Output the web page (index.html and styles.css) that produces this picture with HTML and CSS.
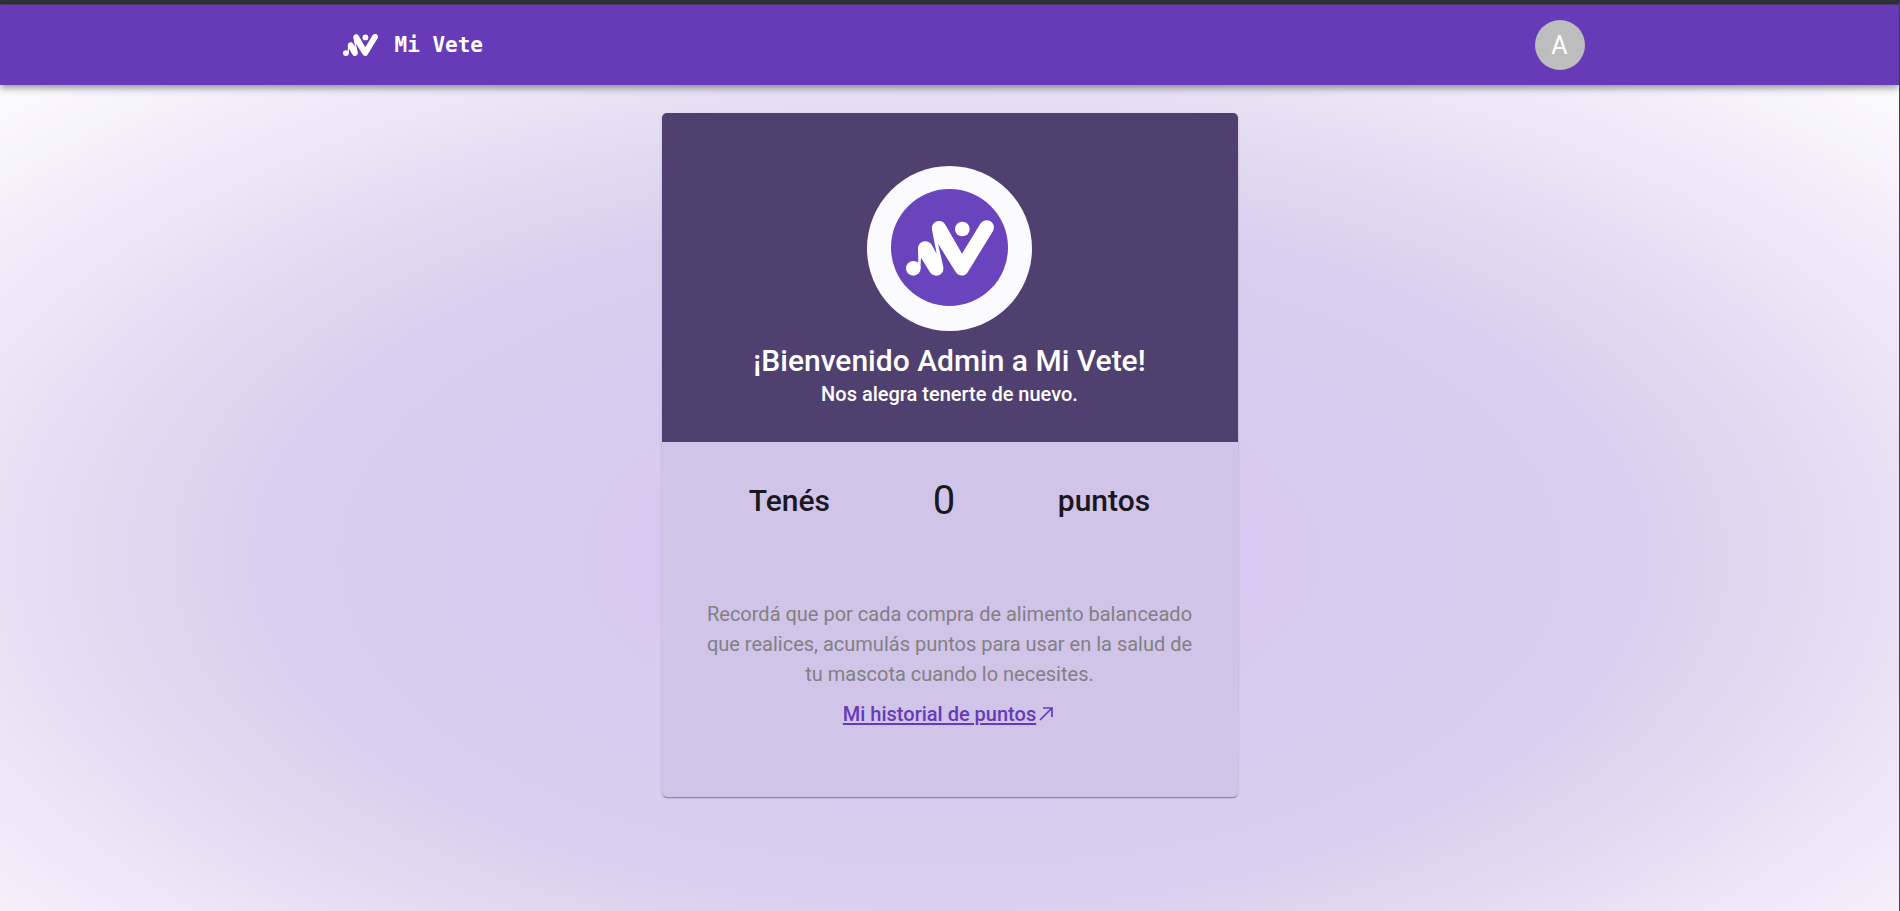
FILE: index.html
```html
<!DOCTYPE html>
<html lang="es">
<head>
<meta charset="utf-8">
<meta name="viewport" content="width=device-width, initial-scale=1">
<title>Mi Vete</title>
<link rel="stylesheet" href="styles.css">
</head>
<body>
<svg class="defs" width="0" height="0" aria-hidden="true">
  <symbol id="mark" viewBox="138 180 264 166">
    <circle cx="160" cy="324" r="22"/>
    <circle cx="307" cy="206" r="22"/>
    <path d="M174 265C174 240 204 236 214 252L230 280L216 208C212 183 244 173 256 193L306 280L361 190C377 167 412 185 399 212L324 334C315 350 296 349 287 335L234 250L250 320C254 345 222 355 210 336L183 292L181 326L168 312L175 303Z"/>
  </symbol>
</svg>
<div class="page">
  <header class="bar">
    <div class="bar-inner">
      <a class="brand" href="#">
        <svg class="brand-mark" aria-hidden="true"><use href="#mark"/></svg>
        <span>Mi Vete</span>
      </a>
      <button class="avatar" type="button" aria-label="Cuenta de Admin">A</button>
    </div>
  </header>
  <main class="content">
    <article class="card">
      <header class="welcome">
        <div class="badge"><div class="badge-core"><svg class="badge-mark" aria-hidden="true"><use href="#mark"/></svg></div></div>
        <h1 class="title">¡Bienvenido Admin a Mi Vete!</h1>
        <p class="subtitle">Nos alegra tenerte de nuevo.</p>
      </header>
      <div class="body">
        <div class="points">
          <span>Tenés</span>
          <span class="count">0</span>
          <span>puntos</span>
        </div>
        <p class="note">Recordá que por cada compra de alimento balanceado que realices, acumulás puntos para usar en la salud de tu mascota cuando lo necesites.</p>
        <p class="more"><a class="history" href="#">Mi historial de puntos</a><svg class="arrow" viewBox="0 0 20 20" aria-hidden="true"><path d="M4 16L16 4M7 4H16V13" /></svg></p>
      </div>
    </article>
  </main>
</div>
</body>
</html>
```
FILE: styles.css
```css
* { box-sizing: border-box; }
body {
  margin: 0;
  font-family: Roboto, "Liberation Sans", sans-serif;
  font-size: 20px;
  line-height: 30px;
  color: #1a171e;
}
h1, p { margin: 0; }
.defs { position: absolute; }
.page {
  min-height: 100vh;
  border-top: 4px solid #2d323e;
  border-right: 1px solid #4a4456;
  background: radial-gradient(73% 77% at 50% 61%, #d8c5f5 0%, #dacfee 50%, #ffffff 100%);
}
.bar {
  position: relative;
  background: #673ab7;
  border-top: 1px solid #54385f;
  box-shadow: 0 3px 5px -1px rgba(0,0,0,.2), 0 5px 6px rgba(0,0,0,.14), 0 1px 12px rgba(0,0,0,.12);
}
.bar-inner {
  display: flex;
  align-items: center;
  justify-content: space-between;
  max-width: 1270px;
  height: 80px;
  margin: 0 auto;
  padding-left: 28px;
}
.brand {
  display: flex;
  align-items: center;
  gap: 17px;
  color: #fff;
  font-family: "DejaVu Sans Mono", monospace;
  font-size: 21px;
  font-weight: 700;
  text-decoration: none;
}
.brand-mark { width: 35px; height: 22px; fill: #fff; }
.avatar {
  width: 50px;
  height: 50px;
  padding: 0;
  border: 0;
  border-radius: 50%;
  background: #bdbdbd;
  color: #fff;
  font: 400 25px/52px Roboto, sans-serif;
}
.content { padding: 28px 16px; }
.card {
  max-width: 576px;
  margin: 0 auto;
  border-radius: 5px;
  overflow: hidden;
  background: #d0c4e8;
  text-align: center;
  box-shadow: 0 2px 1px -1px rgba(0,0,0,.2), 0 1px 1px rgba(0,0,0,.14), 0 1px 3px rgba(0,0,0,.12);
}
.welcome {
  display: flex;
  flex-direction: column;
  align-items: center;
  padding: 53px 20px 35px;
  background: #504070;
  color: #fff;
}
.badge {
  display: flex;
  align-items: center;
  justify-content: center;
  width: 165px;
  height: 165px;
  padding-bottom: 2px;
  border-radius: 50%;
  background: #fbfaff;
}
.badge-core {
  display: flex;
  align-items: center;
  justify-content: center;
  width: 117px;
  height: 117px;
  border-radius: 50%;
  background: #6a44bd;
}
.badge-mark { width: 88px; height: 56px; fill: #fff; }
.title { margin-top: 10px; font-size: 30px; line-height: 40px; font-weight: 500; }
.subtitle { font-weight: 500; line-height: 26px; }
.body { padding: 30px 40px 68px; }
.points {
  display: flex;
  align-items: center;
  justify-content: space-around;
  margin: 0 -4px 69px;
  font-size: 30px;
  line-height: 58px;
  font-weight: 500;
}
.count { font-size: 40px; font-weight: 400; }
.note { color: #828084; }
.more { display: flex; align-items: center; justify-content: center; margin-top: 10px; }
.history { color: #673ab7; font-weight: 500; text-underline-offset: 2px; }
.arrow { width: 20px; height: 20px; fill: none; stroke: #673ab7; stroke-width: 1.7; }
```
